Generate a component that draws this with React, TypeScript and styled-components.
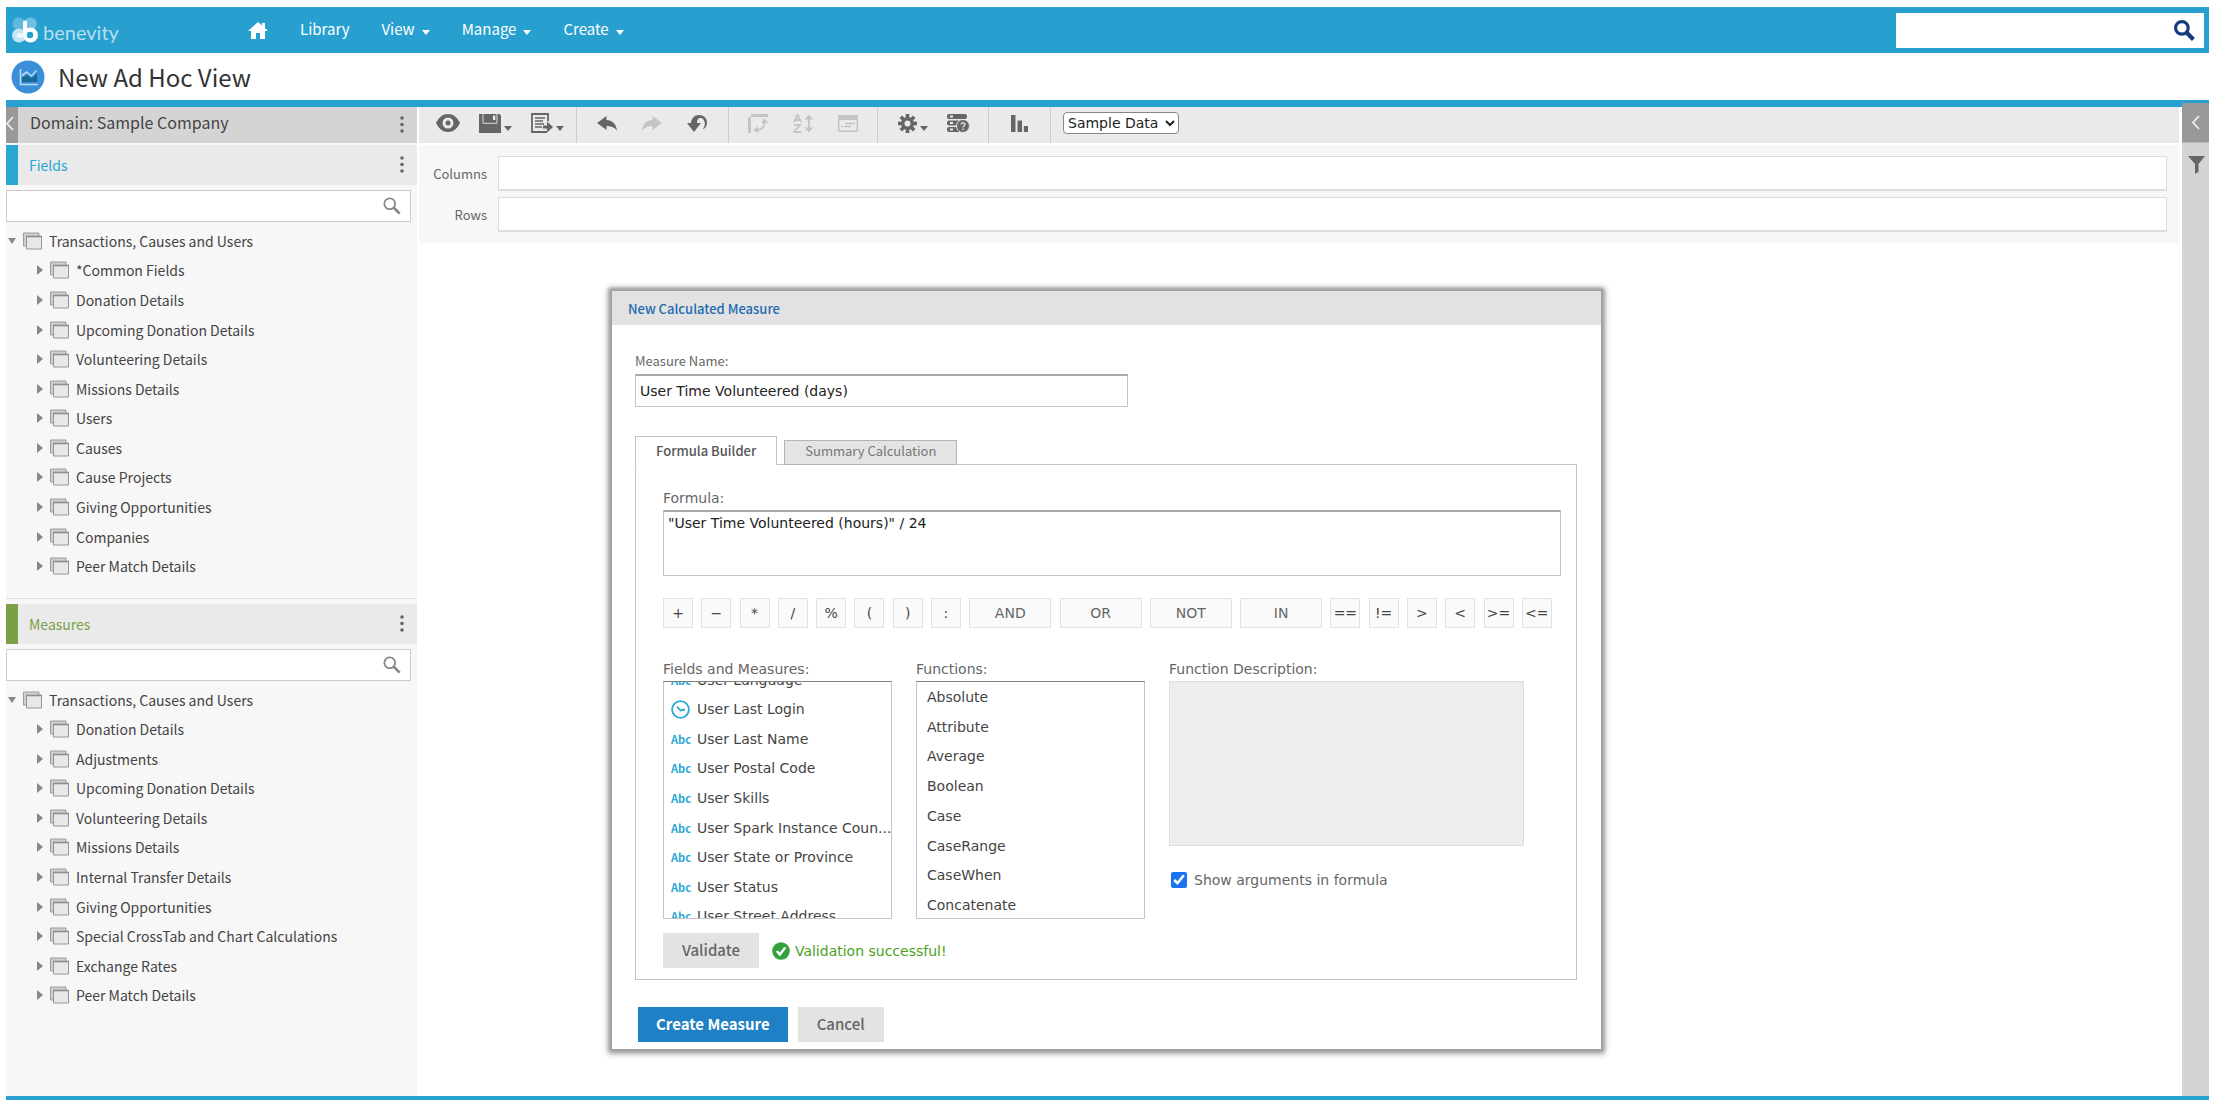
import React, { useLayoutEffect, useRef, useState } from "react";
import styled, { createGlobalStyle, css } from "styled-components";

const sans = `"Noto Sans CJK SC", "Open Sans", sans-serif`;
const wide = `"DejaVu Sans", Verdana, sans-serif`;
const blue = "#27a0cf";

const Global = createGlobalStyle`
  *, *::before, *::after { box-sizing: border-box; }
  body { margin: 0; background: #fff; font-family: ${sans}; color: #444; }
  button, input, select, textarea { font: inherit; color: inherit; margin: 0; }
  button { cursor: pointer; border: 0; padding: 0; background: none; }
  ul { list-style: none; margin: 0; padding: 0; }
  h1, h2, h3 { margin: 0; font-weight: 400; }
  svg { display: block; flex: none; }
`;

/* ---------- page frame ---------- */

const Page = styled.div`
  min-height: 100vh;
  padding: 7px 7px 8px 6px;
  display: flex;
  flex-direction: column;
`;

const TopBar = styled.header`
  display: flex;
  align-items: center;
  height: 46px;
  padding: 0 5px 0 6px;
  background: ${blue};
  color: #fff;
`;

const Brand = styled.a`
  display: flex;
  align-items: center;
  gap: 5px;
  width: 236px;
  color: #b4dff1;
  text-decoration: none;
  font: 400 20px/30px "Lato", sans-serif;
  span { padding-top: 4px; }
`;

const Nav = styled.nav`
  display: flex;
  align-items: center;
  gap: 32px;
  flex: 1;
  font-size: 15px;
  line-height: 24px;
`;

const HomeLink = styled.a`
  color: #fff;
`;

const NavItem = styled.button`
  display: flex;
  align-items: center;
  gap: 7px;
  padding-bottom: 2px;
  color: #fff;
`;

const Caret = styled.span<{ $color: string }>`
  border: 4px solid transparent;
  border-top: 5px solid ${(p) => p.$color};
  border-bottom: 0;
  margin-top: 7px;
`;

const TopSearch = styled.div`
  display: flex;
  align-items: center;
  width: 308px;
  height: 35px;
  padding-right: 9px;
  background: #fff;
  color: #173a7c;
`;

const PlainInput = styled.input`
  flex: 1;
  min-width: 0;
  height: 100%;
  padding: 0 8px;
  border: 0;
  outline: 0;
  background: transparent;
  font-size: 14px;
`;

const TitleBar = styled.div`
  display: flex;
  align-items: center;
  gap: 13px;
  height: 54px;
  padding: 1px 5px 0;
  border-bottom: 7px solid ${blue};
  h1 { font-size: 24px; line-height: 36px; color: #333; }
`;

const Body = styled.div`
  flex: 1;
  display: flex;
  border-bottom: 4px solid ${blue};
`;

/* ---------- left column ---------- */

const Sidebar = styled.aside`
  width: 411px;
  flex: none;
  background: #f7f7f7;
`;

const BarHead = styled.div<{ $tone: string }>`
  display: flex;
  align-items: stretch;
  height: 36px;
  background: ${(p) => p.$tone};
  color: #444;
  h2 { flex: 1; padding-left: 12px; font-size: 16px; line-height: 30px; }
`;

const FoldButton = styled.button`
  width: 12px;
  display: flex;
  justify-content: flex-end;
  align-items: center;
  padding: 0 4px 4px 0;
  overflow: hidden;
  background: #999;
  color: #eee;
`;

const SectionHead = styled.div<{ $accent: string }>`
  display: flex;
  height: 40px;
  border-left: 12px solid ${(p) => p.$accent};
  background: #eaeaea;
  h3 { flex: 1; padding-left: 11px; font-size: 14px; line-height: 40px; color: ${(p) => p.$accent}; }
`;

const KebabButton = styled.button`
  width: 31px;
  display: flex;
  align-items: center;
  justify-content: center;
  padding-bottom: 2px;
  color: #666;
`;

const Section = styled.section`
  margin-top: 2px;
  & + & { margin-top: 17px; padding-top: 5px; border-top: 1px solid #dcdfe0; }
`;

const FilterBox = styled.div`
  display: flex;
  align-items: center;
  height: 32px;
  margin: 5px 6px 4px 0;
  padding-right: 9px;
  border: 1px solid #ccc;
  background: #fff;
  color: #888;
`;

const Tree = styled.ul<{ $height: number }>`
  display: grid;
  grid-auto-rows: 1fr;
  height: ${(p) => p.$height}px;
`;

const TreeItem = styled.li<{ $child?: boolean }>`
  display: flex;
  align-items: center;
  gap: 7px;
  padding-left: ${(p) => (p.$child ? 31 : 2)}px;
  font-size: 14px;
  line-height: 20px;
  color: #444;
`;

const Twisty = styled.button<{ $open?: boolean }>`
  border: 0 solid transparent;
  ${(p) =>
    p.$open
      ? css`border-width: 6px 4px 0; border-top-color: #888;`
      : css`border-width: 5px 0 5px 6px; border-left-color: #888;`}
`;

/* ---------- main column ---------- */

const Main = styled.main`
  position: relative;
  flex: 1;
  min-width: 0;
  min-height: 942px;
  margin: 0 3px 0 2px;
`;

const Toolbar = styled.div`
  display: flex;
  height: 36px;
  background: #eaeaea;
  color: #666;
`;

const ToolGroup = styled.div<{ $gap: number; $left: number; $right: number }>`
  display: flex;
  align-items: center;
  gap: ${(p) => p.$gap}px;
  padding: 0 ${(p) => p.$right}px 4px ${(p) => p.$left}px;
  & + & { border-left: 1px solid #ccc; }
`;

const Tool = styled.button`
  display: flex;
  align-items: center;
  gap: 3px;
  &:disabled { color: #c4c4c4; }
`;

const ToolCaret = styled(Caret)`
  border-top-width: 5px;
  margin-top: 11px;
`;

const DataSelect = styled.select`
  width: 116px;
  height: 22px;
  border: 1px solid #888;
  border-radius: 4px;
  background: #fff;
  color: #222;
  font: 14px ${wide};
`;

const Axes = styled.div`
  display: grid;
  grid-template-columns: 68px 1fr;
  align-items: center;
  gap: 6px 11px;
  margin-top: 2px;
  padding: 11px 12px 11px 0;
  background: #f7f7f7;
  label { text-align: right; font-size: 13px; color: #666; }
  input { width: 100%; height: 35px; padding: 0 8px; border: 1px solid #ddd; border-bottom-width: 2px; background: #fff; outline: 0; }
`;

const Rail = styled.aside`
  width: 27px;
  flex: none;
  margin-top: -4px;
  background: #d4d4d4;
  color: #666;
`;

const RailFold = styled.button`
  display: flex;
  align-items: center;
  justify-content: center;
  width: 100%;
  height: 40px;
  margin-bottom: 13px;
  border-bottom: 1px solid #bbb;
  background: #999;
  color: #eee;
`;

const RailTool = styled.button`
  display: flex;
  justify-content: center;
  width: 100%;
  padding-left: 2px;
`;

/* ---------- dialog ---------- */

const Dialog = styled.form`
  position: absolute;
  left: 193px;
  top: 184px;
  width: 989px;
  background: #fff;
  box-shadow: 0 0 3px 3px #a0a0a0, 0 1px 6px 4px #b0b0b0;
  font: 14px/20px ${wide};
  color: #444;
`;

const DialogTitle = styled.h2`
  height: 34px;
  padding-left: 16px;
  background: #e2e2e2;
  color: #1f6bb0;
  font: 500 13px/36px ${sans};
`;

const DialogBody = styled.div`
  padding: 26px 24px 7px 23px;
`;

const NameLabel = styled.label`
  display: block;
  font: 13px/20px ${sans};
  color: #666;
`;

const field = css`
  border: 1px solid #c4c4c4;
  border-top: 2px solid #aaa;
  background: #fff;
  color: #222;
`;

const NameInput = styled.input`
  ${field}
  display: block;
  width: 493px;
  height: 33px;
  margin: 3px 0 29px;
  padding: 0 4px;
`;

const Tabs = styled.div`
  display: flex;
  align-items: flex-end;
  gap: 7px;
  margin-bottom: -1px;
`;

const Tab = styled.button<{ $active?: boolean }>`
  height: ${(p) => (p.$active ? 29 : 25)}px;
  padding: 0 20px ${(p) => (p.$active ? 0 : 3)}px;
  border: 1px solid ${(p) => (p.$active ? "#c4c4c4" : "#b4b4b4")};
  ${(p) => p.$active && css`border-bottom-color: #fff;`}
  background: ${(p) => (p.$active ? "#fff" : "#e4e4e4")};
  color: ${(p) => (p.$active ? "#555" : "#777")};
  font: ${(p) => (p.$active ? 500 : 400)} 13px/20px ${sans};
`;

const TabPanel = styled.div`
  padding: 23px 15px 11px 27px;
  border: 1px solid #c4c4c4;
`;

const fieldLabel = css`
  display: block;
  height: 22px;
  color: #666;
`;

const FieldLabel = styled.label`
  ${fieldLabel}
`;

const ListLabel = styled.div`
  ${fieldLabel}
`;

const FormulaInput = styled.textarea`
  ${field}
  display: block;
  width: 100%;
  height: 66px;
  padding: 1px 4px;
  resize: none;
`;

const Operators = styled.div`
  display: flex;
  justify-content: space-between;
  margin: 22px 9px 31px 0;
`;

const Operator = styled.button<{ $wide?: boolean }>`
  width: ${(p) => (p.$wide ? 82 : 30)}px;
  height: 30px;
  border: 1px solid #e2e2e2;
  background: #fafafa;
  color: ${(p) => (p.$wide ? "#666" : "#444")};
`;

const Columns = styled.div`
  display: grid;
  grid-template-columns: 229px 229px 355px;
  gap: 24px;
`;

const ListBox = styled.div`
  height: 238px;
  overflow: hidden;
  border: 1px solid #c4c4c4;
  border-top-color: #808080;
`;

const ListRows = styled.ul<{ $height: number }>`
  display: grid;
  grid-auto-rows: 1fr;
  height: ${(p) => p.$height}px;
`;

const ListItem = styled.li<{ $indent: number }>`
  display: flex;
  align-items: center;
  gap: 7px;
  padding-left: ${(p) => p.$indent}px;
  white-space: nowrap;
`;

const Abc = styled.span`
  width: 19px;
  color: #2aa7d4;
  font: 700 11px/20px ${sans};
`;

const Description = styled.div`
  height: 165px;
  border: 1px solid #ddd;
  background: #ededed;
`;

const CheckLabel = styled.label`
  display: flex;
  align-items: center;
  gap: 7px;
  margin: 24px 0 0 2px;
  color: #666;
  input { width: 16px; height: 16px; accent-color: #1a73f0; }
`;

const ValidateRow = styled.div`
  display: flex;
  align-items: center;
  gap: 13px;
  margin-top: 14px;
`;

const Status = styled.output`
  display: flex;
  align-items: center;
  gap: 5px;
  color: #4aa31c;
`;

const Button = styled.button<{ $primary?: boolean }>`
  height: 35px;
  padding: 0 ${(p) => (p.$primary ? 18 : 19)}px 2px;
  background: ${(p) => (p.$primary ? "#2080c6" : "#e3e3e3")};
  color: ${(p) => (p.$primary ? "#fff" : "#666")};
  font: ${(p) => (p.$primary ? 700 : 500)} 15px/33px ${sans};
`;

const Actions = styled.div`
  display: flex;
  gap: 10px;
  padding: 27px 0 0 3px;
`;

/* ---------- icons ---------- */

const Logo = () => (
  <svg width="26" height="26" viewBox="0 0 26 26" aria-hidden="true">
    <circle cx="6.800" cy="6.800" r="6.300" fill="#5fb8dc" />
    <circle cx="18.500" cy="6.800" r="6.300" fill="#6fc0e0" />
    <circle cx="7" cy="18.500" r="7" fill="#c4e5f3" />
    <circle cx="18.500" cy="18" r="7.500" fill="#fff" />
    <path d="M11 5.500a2 2 0 0 1 4 0V18h-4z" fill="#fff" />
    <circle cx="18" cy="18" r="3.200" fill={blue} />
    <path d="M10.500 16.500c-3-1.500-6 0-6 2s3 3.500 6 2z" fill="#eef8fc" />
  </svg>
);

const HomeIcon = () => (
  <svg width="20" height="17" viewBox="0 0 20 17" fill="currentColor" aria-hidden="true">
    <path d="M10 0 0 9h3v8h5v-6h4v6h5V9h3l-3-3V1h-3v2.500z" />
  </svg>
);

const SearchIcon = ({ size, weight }: { size: number; weight: number }) => (
  <svg width={size} height={size} viewBox="0 0 20 20" fill="none" stroke="currentColor" strokeWidth={weight} aria-hidden="true">
    <circle cx="7.500" cy="7.500" r="6" />
    <path d="m12 12 6.500 6.500" strokeWidth={weight + 1} />
  </svg>
);

const ViewBadge = () => (
  <svg width="34" height="34" viewBox="0 0 34 34" aria-hidden="true">
    <circle cx="17" cy="17" r="16.500" fill="#3b8fd9" />
    <path d="M11 22v-4l5-3 5 3 5-5v9z" fill="#176a98" />
    <path d="M9.500 9v15.500H27M11 15.500l4.500-3.500 5 4 5-5.500" fill="none" stroke="#b9daf2" strokeWidth="1.600" />
  </svg>
);

const Chevron = () => (
  <svg width="9" height="15" viewBox="0 0 9 15" fill="none" stroke="currentColor" strokeWidth="1.800" aria-hidden="true">
    <path d="M8 1 2 7.500 8 14" />
  </svg>
);

const Kebab = () => (
  <svg width="4" height="17" viewBox="0 0 4 17" fill="currentColor" aria-hidden="true">
    <circle cx="2" cy="2" r="1.800" />
    <circle cx="2" cy="8.500" r="1.800" />
    <circle cx="2" cy="15" r="1.800" />
  </svg>
);

const SetIcon = () => (
  <svg width="19" height="18" viewBox="0 0 19 18" aria-hidden="true">
    <path d="M.500 1h15.500v13H.500z" fill="#cfcfcf" stroke="#9c9c9c" />
    <path d="M3.500 4.500h15v12.500h-15z" fill="#e8e8e8" stroke="#969696" />
    <path d="M3 4.500h16" stroke="#8c8c8c" strokeWidth="1.600" />
  </svg>
);

const EyeIcon = () => (
  <svg width="24" height="18" viewBox="0 0 24 18" fill="currentColor" aria-hidden="true">
    <path fillRule="evenodd" d="M0 9C3 3 7 0 12 0s9 3 12 9c-3 6-7 9-12 9S3 15 0 9zm12-5.500a5.500 5.500 0 1 0 0 11 5.500 5.500 0 0 0 0-11z" />
    <circle cx="12" cy="9" r="2.500" />
  </svg>
);

const SaveIcon = () => (
  <svg width="22" height="19" viewBox="0 0 22 19" aria-hidden="true">
    <path d="M0 0h20.500l1.500 1.500V19H0z" fill="currentColor" />
    <path d="M4 0v9.300h14V0" fill="none" stroke="#dcdcdc" strokeWidth="1" />
    <path d="M14 1.500h2.300v4.500h-2.300z" fill="#eaeaea" />
  </svg>
);

const ExportIcon = () => (
  <svg width="22" height="20" viewBox="0 0 22 20" fill="none" stroke="currentColor" aria-hidden="true">
    <path d="M17 8V1H1v18h15" strokeWidth="1.800" />
    <path d="M4 5h10M4 8h8M4 11h9M4 14h7" strokeWidth="1.600" />
    <path d="M12 14h5" strokeWidth="3" />
    <path d="M16 8.500 22 14l-6 5.500z" fill="currentColor" stroke="none" />
  </svg>
);

const UndoIcon = ({ flip }: { flip?: boolean }) => (
  <svg width="20" height="15" viewBox="0 0 20 15" fill="currentColor" aria-hidden="true">
    <path
      d={
        flip
          ? "M20 7 10.500 0v4C5 4 1 7.500 0 14.500 3 11 6.500 10 10.500 10v4z"
          : "M0 7 9.500 0v4C15 4 19 7.500 20 14.500 17 11 13.500 10 9.500 10v4z"
      }
    />
  </svg>
);

const RevertIcon = () => (
  <svg width="20" height="17" viewBox="0 0 20 17" fill="currentColor" aria-hidden="true">
    <path d="M0 8h4C4.500 3 7.500 0 12 0c4.500 0 8 3 8 7.500 0 3-1.500 6-4 6.500 1-1.500 1.800-3 1.800-5.500C17.800 5 15.500 3 13.300 3S10 5 10 8h4l-7 9z" />
  </svg>
);

const PivotIcon = () => (
  <svg width="20" height="19" viewBox="0 0 20 19" fill="currentColor" aria-hidden="true">
    <path d="M3 0h17v3H3zM0 3h3v16H0z" />
    <path d="M16.500 8c0 5-2 7.500-7 8" fill="none" stroke="currentColor" strokeWidth="1.800" />
    <path d="m13 9 3.500-5L20 9zM10 12.500v6.500l-5-3z" />
  </svg>
);

const SortIcon = () => (
  <svg width="20" height="19" viewBox="0 0 20 19" fill="none" stroke="currentColor" strokeWidth="1.800" aria-hidden="true">
    <path d="M1 8 4.500.800 8 8M2 6h5M1 11h6l-6 7h7M16 3v13" />
    <path d="m11.500 5.500 4.500-5 4 5zM11.500 13.500l4.500 5 4-5z" fill="currentColor" stroke="none" />
  </svg>
);

const ControlsIcon = () => (
  <svg width="20" height="17" viewBox="0 0 20 17" fill="none" stroke="currentColor" aria-hidden="true">
    <path d="M.700.700h18.600v15.600H.700z" strokeWidth="1.400" />
    <path d="M0 2.500h20" strokeWidth="5" />
    <path d="M7 8.500h10M3 11.500h2M6 11.500h7" strokeWidth="1.400" />
  </svg>
);

const GearIcon = () => (
  <svg width="19" height="19" viewBox="-9.500 -9.500 19 19" fill="currentColor" aria-hidden="true">
    {[0, 45, 90, 135].map((a) => (
      <rect key={a} x="-1.800" y="-9.500" width="3.600" height="19" transform={`rotate(${a})`} />
    ))}
    <circle r="6.500" />
    <circle r="3" fill="#eaeaea" />
  </svg>
);

const QueryIcon = () => (
  <svg width="23" height="19" viewBox="0 0 23 19" aria-hidden="true">
    <g fill="currentColor">
      <rect width="20" height="5" rx="2" />
      <rect y="6.500" width="18" height="5" rx="2" />
      <rect y="13" width="14" height="5" rx="2" />
    </g>
    <path d="M3 2.500h3M3 9h3M3 15.500h3" stroke="#eaeaea" strokeWidth="1.800" />
    <circle cx="16" cy="12" r="6.500" fill="currentColor" stroke="#eaeaea" />
    <path d="M14 10.500c.200-2.500 4.200-2 4 0-.100 1.300-2 1.200-2 3M16 14.500V16" fill="none" stroke="#eaeaea" strokeWidth="1.300" />
  </svg>
);

const BarsIcon = () => (
  <svg width="17" height="17" viewBox="0 0 17 17" fill="currentColor" aria-hidden="true">
    <path d="M0 0h4.500v17H0zM6.500 5.500H11V17H6.500zM12.800 11H17v6h-4.200z" />
  </svg>
);

const FunnelIcon = () => (
  <svg width="17" height="18" viewBox="0 0 17 18" fill="currentColor" aria-hidden="true">
    <path d="M0 0h17l-6.500 8v8L7 18V8z" />
  </svg>
);

const ClockIcon = () => (
  <svg width="19" height="19" viewBox="0 0 19 19" fill="none" stroke="#2aa7d4" strokeWidth="1.800" aria-hidden="true">
    <circle cx="9.500" cy="9.500" r="8.400" />
    <path d="M6 6.500 9.500 10.500 14 9.500" />
  </svg>
);

const OkIcon = () => (
  <svg width="18" height="18" viewBox="0 0 18 18" aria-hidden="true">
    <circle cx="9" cy="9" r="8.800" fill="#34a23c" />
    <path d="m4.800 9 3 3.500 5.500-7" fill="none" stroke="#fff" strokeWidth="2.400" />
  </svg>
);

/* ---------- content ---------- */

const root = "Transactions, Causes and Users";

const fieldSets = [
  "*Common Fields", "Donation Details", "Upcoming Donation Details", "Volunteering Details",
  "Missions Details", "Users", "Causes", "Cause Projects", "Giving Opportunities", "Companies",
  "Peer Match Details",
];

const measureSets = [
  "Donation Details", "Adjustments", "Upcoming Donation Details", "Volunteering Details",
  "Missions Details", "Internal Transfer Details", "Giving Opportunities",
  "Special CrossTab and Chart Calculations", "Exchange Rates", "Peer Match Details",
];

const userFields = [
  "User Language", "User Last Login", "User Last Name", "User Postal Code", "User Skills",
  "User Spark Instance Coun...", "User State or Province", "User Status", "User Street Address",
];

const functions = [
  "Absolute", "Attribute", "Average", "Boolean", "Case", "CaseRange", "CaseWhen", "Concatenate",
];

const operators = [
  "+", "−", "*", "/", "%", "(", ")", ":", "AND", "OR", "NOT", "IN", "==", "!=", ">", "<", ">=", "<=",
];

function TreeSection({ title, accent, sets, height }: { title: string; accent: string; sets: string[]; height: number }) {
  return (
    <Section>
      <SectionHead $accent={accent}>
        <h3>{title}</h3>
        <KebabButton type="button" aria-label={`${title} options`}><Kebab /></KebabButton>
      </SectionHead>
      <FilterBox>
        <PlainInput aria-label={`Search ${title}`} />
        <SearchIcon size={18} weight={2} />
      </FilterBox>
      <Tree $height={height}>
        <TreeItem>
          <Twisty $open type="button" aria-label={`Collapse ${root}`} />
          <SetIcon />
          {root}
        </TreeItem>
        {sets.map((name) => (
          <TreeItem key={name} $child>
            <Twisty type="button" aria-label={`Expand ${name}`} />
            <SetIcon />
            {name}
          </TreeItem>
        ))}
      </Tree>
    </Section>
  );
}

function MeasureDialog() {
  const [name, setName] = useState("User Time Volunteered (days)");
  const [formula, setFormula] = useState('"User Time Volunteered (hours)" / 24');
  const [showArgs, setShowArgs] = useState(true);
  const list = useRef<HTMLDivElement>(null);

  useLayoutEffect(() => {
    if (list.current) list.current.scrollTop = 17;
  }, []);

  return (
    <Dialog onSubmit={(e) => e.preventDefault()}>
      <DialogTitle>New Calculated Measure</DialogTitle>
      <DialogBody>
        <NameLabel htmlFor="measure-name">Measure Name:</NameLabel>
        <NameInput id="measure-name" value={name} onChange={(e) => setName(e.target.value)} />
        <Tabs>
          <Tab type="button" $active>Formula Builder</Tab>
          <Tab type="button">Summary Calculation</Tab>
        </Tabs>
        <TabPanel>
          <FieldLabel htmlFor="formula">Formula:</FieldLabel>
          <FormulaInput id="formula" spellCheck={false} value={formula} onChange={(e) => setFormula(e.target.value)} />
          <Operators>
            {operators.map((op) => (
              <Operator key={op} type="button" $wide={/[A-Z]/.test(op)} onClick={() => setFormula(`${formula} ${op} `)}>
                {op}
              </Operator>
            ))}
          </Operators>
          <Columns>
            <div>
              <ListLabel id="fields-label">Fields and Measures:</ListLabel>
              <ListBox ref={list}>
                <ListRows $height={266} aria-labelledby="fields-label">
                  {userFields.map((f) => (
                    <ListItem key={f} $indent={7}>
                      {f === "User Last Login" ? <ClockIcon /> : <Abc>Abc</Abc>}
                      {f}
                    </ListItem>
                  ))}
                </ListRows>
              </ListBox>
            </div>
            <div>
              <ListLabel id="functions-label">Functions:</ListLabel>
              <ListBox>
                <ListRows $height={238} aria-labelledby="functions-label">
                  {functions.map((f) => <ListItem key={f} $indent={10}>{f}</ListItem>)}
                </ListRows>
              </ListBox>
            </div>
            <div>
              <ListLabel>Function Description:</ListLabel>
              <Description />
              <CheckLabel>
                <input type="checkbox" checked={showArgs} onChange={(e) => setShowArgs(e.target.checked)} />
                Show arguments in formula
              </CheckLabel>
            </div>
          </Columns>
          <ValidateRow>
            <Button type="button">Validate</Button>
            <Status><OkIcon />Validation successful!</Status>
          </ValidateRow>
        </TabPanel>
        <Actions>
          <Button type="submit" $primary>Create Measure</Button>
          <Button type="button">Cancel</Button>
        </Actions>
      </DialogBody>
    </Dialog>
  );
}

export default function App() {
  return (
    <Page>
      <Global />
      <TopBar>
        <Brand href="#"><Logo /><span>benevity</span></Brand>
        <Nav>
          <HomeLink href="#" aria-label="Home"><HomeIcon /></HomeLink>
          <NavItem type="button">Library</NavItem>
          {["View", "Manage", "Create"].map((item) => (
            <NavItem key={item} type="button">{item}<Caret $color="#fff" /></NavItem>
          ))}
        </Nav>
        <TopSearch>
          <PlainInput aria-label="Search repository" />
          <SearchIcon size={21} weight={3} />
        </TopSearch>
      </TopBar>
      <TitleBar>
        <ViewBadge />
        <h1>New Ad Hoc View</h1>
      </TitleBar>
      <Body>
        <Sidebar>
          <BarHead $tone="#d4d4d4">
            <FoldButton type="button" aria-label="Collapse data panel"><Chevron /></FoldButton>
            <h2>Domain: Sample Company</h2>
            <KebabButton type="button" aria-label="Domain options"><Kebab /></KebabButton>
          </BarHead>
          <TreeSection title="Fields" accent="#29a6d2" sets={fieldSets} height={355} />
          <TreeSection title="Measures" accent="#7b9f45" sets={measureSets} height={325} />
        </Sidebar>
        <Main>
          <Toolbar>
            <ToolGroup $gap={19} $left={17} $right={12}>
              <Tool type="button" aria-label="Preview"><EyeIcon /></Tool>
              <Tool type="button" aria-label="Save"><SaveIcon /><ToolCaret $color="#666" /></Tool>
              <Tool type="button" aria-label="Export"><ExportIcon /><ToolCaret $color="#666" /></Tool>
            </ToolGroup>
            <ToolGroup $gap={25} $left={20} $right={21}>
              <Tool type="button" aria-label="Undo"><UndoIcon /></Tool>
              <Tool type="button" aria-label="Redo" disabled><UndoIcon flip /></Tool>
              <Tool type="button" aria-label="Undo all"><RevertIcon /></Tool>
            </ToolGroup>
            <ToolGroup $gap={25} $left={19} $right={19}>
              <Tool type="button" aria-label="Switch groups" disabled><PivotIcon /></Tool>
              <Tool type="button" aria-label="Sort" disabled><SortIcon /></Tool>
              <Tool type="button" aria-label="Input controls" disabled><ControlsIcon /></Tool>
            </ToolGroup>
            <ToolGroup $gap={19} $left={20} $right={18}>
              <Tool type="button" aria-label="Page options"><GearIcon /><ToolCaret $color="#666" /></Tool>
              <Tool type="button" aria-label="View query"><QueryIcon /></Tool>
            </ToolGroup>
            <ToolGroup $gap={0} $left={22} $right={22}>
              <Tool type="button" aria-label="Select visualization"><BarsIcon /></Tool>
            </ToolGroup>
            <ToolGroup $gap={0} $left={12} $right={12}>
              <DataSelect aria-label="Data mode" defaultValue="Sample Data">
                <option>Sample Data</option>
                <option>Full Data</option>
              </DataSelect>
            </ToolGroup>
          </Toolbar>
          <Axes>
            <label htmlFor="columns">Columns</label>
            <input id="columns" />
            <label htmlFor="rows">Rows</label>
            <input id="rows" />
          </Axes>
          <MeasureDialog />
        </Main>
        <Rail>
          <RailFold type="button" aria-label="Expand filters"><Chevron /></RailFold>
          <RailTool type="button" aria-label="Filters"><FunnelIcon /></RailTool>
        </Rail>
      </Body>
    </Page>
  );
}
